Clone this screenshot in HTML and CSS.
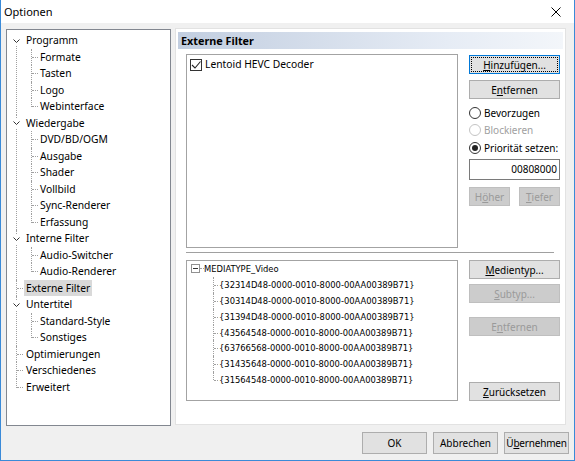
FILE: index.html
```html
<!DOCTYPE html>
<html lang="de">
<head>
	<meta charset="UTF-8">
	<title>Optionen</title>
	<link rel="stylesheet" href="styles.css">
</head>
<body>
	<div class="window">
		<div class="titlebar">
			<span class="title">Optionen</span>
			<span class="close">
				<svg width="10" height="10" viewBox="0 0 10 10"><path d="M0.5 0.5L9.5 9.5M9.5 0.5L0.5 9.5" stroke="#000" stroke-width="1" fill="none"/></svg>
			</span>
		</div>

		<div class="main">
			<!-- Seitenbaum -->
			<div class="tree-box">
				<ul class="tree">
					<li class="open">
						<span class="exp"><svg width="7" height="5" viewBox="0 0 7 5"><path d="M0.5 0.5L3.5 3.5L6.5 0.5" stroke="#333" fill="none"/></svg></span>
						<div class="row"><span class="label">Programm</span></div>
						<ul class="sub">
							<li><div class="row"><span class="label">Formate</span></div></li>
							<li><div class="row"><span class="label">Tasten</span></div></li>
							<li><div class="row"><span class="label">Logo</span></div></li>
							<li><div class="row"><span class="label">Webinterface</span></div></li>
						</ul>
					</li>
					<li class="open">
						<span class="exp"><svg width="7" height="5" viewBox="0 0 7 5"><path d="M0.5 0.5L3.5 3.5L6.5 0.5" stroke="#333" fill="none"/></svg></span>
						<div class="row"><span class="label">Wiedergabe</span></div>
						<ul class="sub">
							<li><div class="row"><span class="label">DVD/BD/OGM</span></div></li>
							<li><div class="row"><span class="label">Ausgabe</span></div></li>
							<li><div class="row"><span class="label">Shader</span></div></li>
							<li><div class="row"><span class="label">Vollbild</span></div></li>
							<li><div class="row"><span class="label">Sync-Renderer</span></div></li>
							<li><div class="row"><span class="label">Erfassung</span></div></li>
						</ul>
					</li>
					<li class="open">
						<span class="exp"><svg width="7" height="5" viewBox="0 0 7 5"><path d="M0.5 0.5L3.5 3.5L6.5 0.5" stroke="#333" fill="none"/></svg></span>
						<div class="row"><span class="label">Interne Filter</span></div>
						<ul class="sub">
							<li><div class="row"><span class="label">Audio-Switcher</span></div></li>
							<li><div class="row"><span class="label">Audio-Renderer</span></div></li>
						</ul>
					</li>
					<li class="leaf"><div class="row"><span class="label selected">Externe Filter</span></div></li>
					<li class="open">
						<span class="exp"><svg width="7" height="5" viewBox="0 0 7 5"><path d="M0.5 0.5L3.5 3.5L6.5 0.5" stroke="#333" fill="none"/></svg></span>
						<div class="row"><span class="label">Untertitel</span></div>
						<ul class="sub">
							<li><div class="row"><span class="label">Standard-Style</span></div></li>
							<li><div class="row"><span class="label">Sonstiges</span></div></li>
						</ul>
					</li>
					<li class="leaf"><div class="row"><span class="label">Optimierungen</span></div></li>
					<li class="leaf"><div class="row"><span class="label">Verschiedenes</span></div></li>
					<li class="leaf"><div class="row"><span class="label">Erweitert</span></div></li>
				</ul>
			</div>

			<!-- Seite: Externe Filter -->
			<div class="page">
				<div class="page-header">Externe Filter</div>
				<div class="content">
					<div class="section upper">
						<div class="listbox filters">
							<div class="filter-item">
								<span class="checkbox">
									<svg width="10" height="10" viewBox="0 0 10 10"><path d="M1 5L4 8L9.5 1.5" stroke="#222" stroke-width="1.1" fill="none"/></svg>
								</span>
								<span>Lentoid HEVC Decoder</span>
							</div>
						</div>
						<div class="side">
							<button class="btn focus"><u>H</u>inzufügen...</button>
							<button class="btn gap6">E<u>n</u>tfernen</button>
							<div class="radios">
								<label class="radio"><span class="dot"></span>Bevorzugen</label>
								<label class="radio disabled"><span class="dot"></span>Blockieren</label>
								<label class="radio checked"><span class="dot"></span>Priorität setzen:</label>
							</div>
							<div class="edit">00808000</div>
							<div class="pair">
								<button class="btn small" disabled>H<u>ö</u>her</button>
								<button class="btn small" disabled><u>T</u>iefer</button>
							</div>
						</div>
					</div>

					<div class="separator"></div>

					<div class="section lower">
						<div class="listbox types">
							<ul class="mt-tree">
								<li class="mt-root">
									<div class="mt-row"><span class="minus"></span><span class="mt-dash"></span>MEDIATYPE_Video</div>
									<ul class="mt-sub">
										<li><div class="mt-row">{32314D48-0000-0010-8000-00AA00389B71}</div></li>
										<li><div class="mt-row">{30314D48-0000-0010-8000-00AA00389B71}</div></li>
										<li><div class="mt-row">{31394D48-0000-0010-8000-00AA00389B71}</div></li>
										<li><div class="mt-row">{43564548-0000-0010-8000-00AA00389B71}</div></li>
										<li><div class="mt-row">{63766568-0000-0010-8000-00AA00389B71}</div></li>
										<li><div class="mt-row">{31435648-0000-0010-8000-00AA00389B71}</div></li>
										<li><div class="mt-row">{31564548-0000-0010-8000-00AA00389B71}</div></li>
									</ul>
								</li>
							</ul>
						</div>
						<div class="side">
							<button class="btn"><u>M</u>edientyp...</button>
							<button class="btn gap5" disabled><u>S</u>ubtyp...</button>
							<button class="btn gap14" disabled>E<u>n</u>tfernen</button>
							<button class="btn bottom"><u>Z</u>urücksetzen</button>
						</div>
					</div>
				</div>
			</div>
		</div>

		<div class="footer">
			<button class="btn dlg">OK</button>
			<button class="btn dlg">Abbrechen</button>
			<button class="btn dlg narrow">Ü<u>b</u>ernehmen</button>
		</div>
	</div>
</body>
</html>
```

FILE: styles.css
```css
* {
	margin: 0;
	padding: 0;
	box-sizing: border-box;
}
body {
	width: 575px;
	height: 461px;
	overflow: hidden;
	font-family: "Noto Sans", "Open Sans", sans-serif;
	font-size: 10px;
	color: #000;
	background: #f0f0f0;
}
ul {
	list-style: none;
}
u {
	text-decoration: underline;
	text-underline-offset: 1px;
}

.window {
	width: 575px;
	height: 461px;
	display: flex;
	flex-direction: column;
	border: 1px solid #3a8ad8;
	border-top: none;
	background: #f0f0f0;
}
.titlebar {
	height: 23px;
	flex: none;
	background: #fff;
	display: flex;
	align-items: center;
	justify-content: space-between;
	padding: 0 13px 0 3px;
}
.title {
	font-size: 11px;
}
.close {
	display: flex;
}

.main {
	display: flex;
	gap: 4px;
	padding: 6px 8px 0 5px;
	height: 403px;
	flex: none;
}

/* linker Baum */
.tree-box {
	width: 165px;
	height: 397px;
	background: #fff;
	border: 1px solid #828790;
	overflow: hidden;
}
.tree {
	padding: 2px 0 0 9px;
	font-size: 10.3px;
}
.tree li {
	position: relative;
}
.row {
	height: 16.5px;
	line-height: 16px;
	white-space: nowrap;
}
.label {
	display: inline-block;
	padding: 0 2px;
	line-height: 16px;
}
.label.selected {
	background: #d9d9d9;
}
.tree > li {
	padding-left: 8px;
}
.tree > li::before,
.sub > li::before {
	content: '';
	position: absolute;
	left: 0;
	top: 0;
	bottom: 0;
	border-left: 1px dotted #a0a0a0;
}
.tree > li:first-child::before {
	top: 8px;
}
.tree > li:last-child::before,
.sub > li:last-child::before {
	bottom: auto;
	height: 9px;
}
.tree > li.leaf::after,
.sub > li::after {
	content: '';
	position: absolute;
	left: 1px;
	top: 8px;
	width: 6px;
	border-top: 1px dotted #a0a0a0;
}
.exp {
	position: absolute;
	left: -4px;
	top: 4px;
	width: 9px;
	height: 10px;
	background: #fff;
	display: flex;
	align-items: center;
	justify-content: center;
	z-index: 1;
}
.sub {
	margin-left: 7px;
}
.sub > li {
	padding-left: 7px;
}

/* rechte Seite */
.page {
	width: 391px;
	height: 397px;
	margin-top: -1px;
	background: #fff;
	border: 1px solid #e2e2e2;
	padding: 3px 2px;
}
.page-header {
	height: 17px;
	line-height: 17px;
	padding-left: 3px;
	font-weight: bold;
	font-size: 10.8px;
	background: linear-gradient(to right, #c2cee0, #e6ecf5 70%, #f3f6fa);
}
.content {
	padding: 5px 0 0 8px;
}
.section {
	display: flex;
	gap: 11px;
}
.listbox {
	width: 272px;
	background: #fff;
	border: 1px solid #a3a3a3;
}
.filters {
	height: 194px;
	padding: 3px 3px;
}
.filter-item {
	display: flex;
	align-items: center;
	gap: 3px;
	height: 13px;
	line-height: 13px;
	font-size: 10.3px;
}
.checkbox {
	width: 12px;
	height: 12px;
	border: 1px solid #333;
	display: flex;
	align-items: center;
	justify-content: center;
}

.side {
	width: 91px;
	display: flex;
	flex-direction: column;
}
.upper .side {
	padding-top: 1px;
}
.btn {
	height: 19px;
	width: 100%;
	font-family: inherit;
	font-size: 10px;
	color: #000;
	background: #e1e1e1;
	border: 1px solid #adadad;
	line-height: 16px;
}
.btn:disabled {
	background: #cccccc;
	border-color: #bfbfbf;
	color: #9a9a9a;
}
.btn.focus {
	border-color: #0078d7;
	outline: 1px dotted #000;
	outline-offset: -3px;
}
.gap6 {
	margin-top: 6px;
}
.gap5 {
	margin-top: 5px;
}
.gap14 {
	margin-top: 14px;
}
.bottom {
	margin-top: auto;
}
.radios {
	margin-top: 5px;
}
.radio {
	display: flex;
	align-items: center;
	gap: 3px;
	height: 17.5px;
}
.radio .dot {
	width: 12px;
	height: 12px;
	border-radius: 50%;
	border: 1px solid #333;
	background: #fff;
	display: flex;
	align-items: center;
	justify-content: center;
}
.radio.checked .dot::after {
	content: '';
	width: 6px;
	height: 6px;
	border-radius: 50%;
	background: #222;
}
.radio.disabled {
	color: #a0a0a0;
}
.radio.disabled .dot {
	border-color: #c4c4c4;
}
.edit {
	margin-top: 2.5px;
	height: 21px;
	border: 1px solid #7a7a7a;
	background: #fff;
	text-align: right;
	padding-right: 2px;
	line-height: 19px;
}
.pair {
	margin-top: 7px;
	display: flex;
	justify-content: space-between;
}
.btn.small {
	width: 41px;
}

.separator {
	width: 368px;
	height: 2px;
	margin: 4px 0 6px;
	border-top: 1px solid #a0a0a0;
	border-bottom: 1px solid #fff;
}

/* Medientypen */
.types {
	height: 141px;
	font-family: "DejaVu Sans Condensed", "DejaVu Sans", sans-serif;
	font-stretch: condensed;
	font-size: 9.3px;
}
.mt-tree {
	padding: 0 0 0 4px;
}
.mt-row {
	height: 15.9px;
	line-height: 16px;
	display: flex;
	align-items: center;
	white-space: nowrap;
}
.minus {
	position: relative;
	width: 9px;
	height: 9px;
	border: 1px solid #919191;
	background: #fff;
	flex: none;
}
.minus::after {
	content: '';
	position: absolute;
	left: 1px;
	top: 3px;
	width: 5px;
	height: 1px;
	background: #333;
}
.mt-dash {
	width: 4px;
	border-top: 1px dotted #a0a0a0;
	flex: none;
}
.mt-sub {
	margin-left: 22px;
}
.mt-sub > li {
	position: relative;
	padding-left: 6px;
}
.mt-sub > li::before {
	content: '';
	position: absolute;
	left: 0;
	top: 0;
	bottom: 0;
	border-left: 1px dotted #a0a0a0;
}
.mt-sub > li:last-child::before {
	bottom: auto;
	height: 8px;
}
.mt-sub > li::after {
	content: '';
	position: absolute;
	left: 1px;
	top: 8px;
	width: 4px;
	border-top: 1px dotted #a0a0a0;
}

.footer {
	display: flex;
	justify-content: flex-end;
	gap: 6px;
	padding: 6px 5px 0 0;
}
.btn.dlg {
	width: 65px;
	height: 22px;
}
.btn.narrow {
	letter-spacing: -0.2px;
}
```
